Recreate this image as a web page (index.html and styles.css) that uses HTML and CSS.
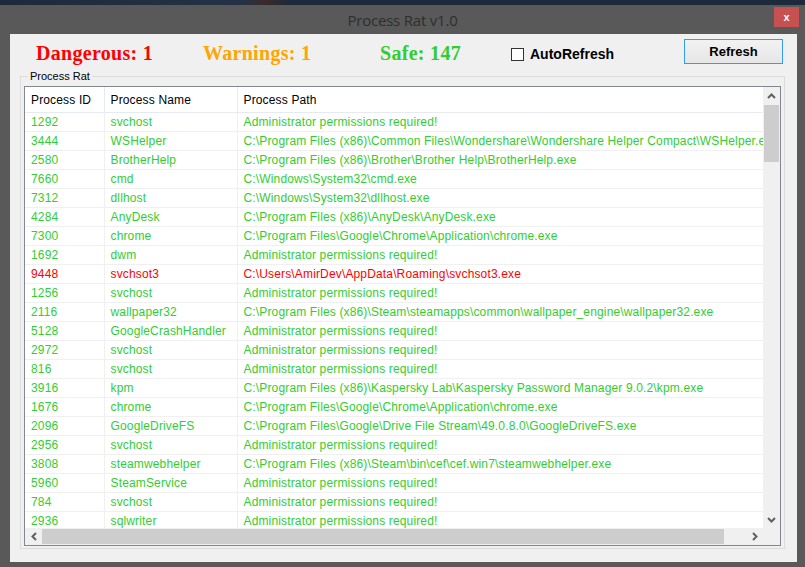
FILE: index.html
```html
<!DOCTYPE html>
<html lang="en">
<head>
    <meta charset="UTF-8">
    <title>Process Rat v1.0</title>
    <link rel="stylesheet" href="styles.css">
</head>
<body>
    <div class="desktop-strip"></div>
    <div class="app-window">
        <div class="title-bar">
            <span class="title-text">Process Rat v1.0</span>
            <button class="close-btn" type="button">x</button>
        </div>

        <div class="client-area">
            <div class="top-bar">
                <span class="stat stat-danger">Dangerous: 1</span>
                <span class="stat stat-warning">Warnings: 1</span>
                <span class="stat stat-safe">Safe: 147</span>
                <label class="auto-refresh">
                    <span class="check-box"></span>
                    AutoRefresh
                </label>
                <button class="refresh-btn" type="button">Refresh</button>
            </div>

            <div class="group-box">
                <span class="group-label">Process Rat</span>

                <div class="list-view">
                    <div class="list-body">
                        <table class="proc-table">
                            <colgroup>
                                <col class="col-id">
                                <col class="col-name">
                                <col class="col-path">
                            </colgroup>
                            <thead>
                                <tr>
                                    <th>Process ID</th>
                                    <th>Process Name</th>
                                    <th>Process Path</th>
                                </tr>
                            </thead>
                            <tbody>
                                <tr><td>1292</td><td>svchost</td><td>Administrator permissions required!</td></tr>
                                <tr><td>3444</td><td>WSHelper</td><td>C:\Program Files (x86)\Common Files\Wondershare\Wondershare Helper Compact\WSHelper.exe</td></tr>
                                <tr><td>2580</td><td>BrotherHelp</td><td>C:\Program Files (x86)\Brother\Brother Help\BrotherHelp.exe</td></tr>
                                <tr><td>7660</td><td>cmd</td><td>C:\Windows\System32\cmd.exe</td></tr>
                                <tr><td>7312</td><td>dllhost</td><td>C:\Windows\System32\dllhost.exe</td></tr>
                                <tr><td>4284</td><td>AnyDesk</td><td>C:\Program Files (x86)\AnyDesk\AnyDesk.exe</td></tr>
                                <tr><td>7300</td><td>chrome</td><td>C:\Program Files\Google\Chrome\Application\chrome.exe</td></tr>
                                <tr><td>1692</td><td>dwm</td><td>Administrator permissions required!</td></tr>
                                <tr class="row-danger"><td>9448</td><td>svchsot3</td><td>C:\Users\AmirDev\AppData\Roaming\svchsot3.exe</td></tr>
                                <tr><td>1256</td><td>svchost</td><td>Administrator permissions required!</td></tr>
                                <tr><td>2116</td><td>wallpaper32</td><td>C:\Program Files (x86)\Steam\steamapps\common\wallpaper_engine\wallpaper32.exe</td></tr>
                                <tr><td>5128</td><td>GoogleCrashHandler</td><td>Administrator permissions required!</td></tr>
                                <tr><td>2972</td><td>svchost</td><td>Administrator permissions required!</td></tr>
                                <tr><td>816</td><td>svchost</td><td>Administrator permissions required!</td></tr>
                                <tr><td>3916</td><td>kpm</td><td>C:\Program Files (x86)\Kaspersky Lab\Kaspersky Password Manager 9.0.2\kpm.exe</td></tr>
                                <tr><td>1676</td><td>chrome</td><td>C:\Program Files\Google\Chrome\Application\chrome.exe</td></tr>
                                <tr><td>2096</td><td>GoogleDriveFS</td><td>C:\Program Files\Google\Drive File Stream\49.0.8.0\GoogleDriveFS.exe</td></tr>
                                <tr><td>2956</td><td>svchost</td><td>Administrator permissions required!</td></tr>
                                <tr><td>3808</td><td>steamwebhelper</td><td>C:\Program Files (x86)\Steam\bin\cef\cef.win7\steamwebhelper.exe</td></tr>
                                <tr><td>5960</td><td>SteamService</td><td>Administrator permissions required!</td></tr>
                                <tr><td>784</td><td>svchost</td><td>Administrator permissions required!</td></tr>
                                <tr><td>2936</td><td>sqlwriter</td><td>Administrator permissions required!</td></tr>
                            </tbody>
                        </table>
                    </div>

                    <div class="v-scroll">
                        <span class="scroll-arrow">
                            <svg width="9" height="6" viewBox="0 0 9 6"><path d="M1 5 L4.5 1.5 L8 5" fill="none" stroke="#606060" stroke-width="2"/></svg>
                        </span>
                        <span class="v-thumb"></span>
                        <span class="scroll-fill"></span>
                        <span class="scroll-arrow">
                            <svg width="9" height="6" viewBox="0 0 9 6"><path d="M1 1 L4.5 4.5 L8 1" fill="none" stroke="#606060" stroke-width="2"/></svg>
                        </span>
                    </div>

                    <div class="h-scroll">
                        <span class="scroll-arrow">
                            <svg width="6" height="9" viewBox="0 0 6 9"><path d="M5 1 L1.5 4.5 L5 8" fill="none" stroke="#606060" stroke-width="2"/></svg>
                        </span>
                        <span class="h-thumb"></span>
                        <span class="scroll-fill"></span>
                        <span class="scroll-arrow">
                            <svg width="6" height="9" viewBox="0 0 6 9"><path d="M1 1 L4.5 4.5 L1 8" fill="none" stroke="#606060" stroke-width="2"/></svg>
                        </span>
                    </div>

                    <div class="scroll-corner"></div>
                </div>
            </div>
        </div>
    </div>
</body>
</html>
```

FILE: styles.css
```css
:root {
    --frame-color: #595959;
    --client-color: #f0f0f0;
    --safe-color: #32cd32;
    --danger-color: #ff0000;
    --warning-color: #ffa500;
    --grid-line: #f0f0f0;
}

* {
    margin: 0;
    padding: 0;
    box-sizing: border-box;
}

body {
    width: 805px;
    height: 567px;
    overflow: hidden;
    background-color: #1c2838;
    font-family: "Liberation Sans", Arial, sans-serif;
    color: #000;
}

.desktop-strip {
    height: 5px;
    background: linear-gradient(90deg, #1d2a3b 0%, #243247 30%, #3a2a2a 33%, #1d2a3b 36%, #1d2a3b 100%);
}

.app-window {
    height: 562px;
    background-color: var(--frame-color);
    padding: 0 8px 5px 10px;
    display: flex;
    flex-direction: column;
}

.title-bar {
    flex-shrink: 0;
    height: 29px;
    display: grid;
    grid-template-columns: 1fr auto 1fr;
    align-items: center;
    margin-left: -10px;
    margin-right: -8px;
}

.title-text {
    grid-column: 2;
    font-family: "Open Sans", "Noto Sans", sans-serif;
    font-size: 15px;
    color: #2e2e2e;
    letter-spacing: -0.2px;
}

.close-btn {
    grid-column: 3;
    justify-self: end;
    align-self: start;
    margin-top: 2px;
    margin-right: 6px;
    width: 25px;
    height: 20px;
    border: none;
    background-color: #c75050;
    color: #fff;
    font-family: "Liberation Sans", Arial, sans-serif;
    font-size: 11px;
    font-weight: 700;
    line-height: 18px;
}

.client-area {
    flex: 1;
    min-height: 0;
    background-color: var(--client-color);
    display: flex;
    flex-direction: column;
    padding-bottom: 13px;
}

.top-bar {
    flex-shrink: 0;
    height: 42px;
    display: flex;
    align-items: flex-start;
    padding-left: 26px;
    padding-right: 14px;
}

.stat {
    font-family: "Liberation Serif", "Times New Roman", serif;
    font-weight: 700;
    font-size: 20px;
    line-height: 20px;
    margin-top: 9px;
    letter-spacing: 0.3px;
}

.stat-danger {
    width: 167px;
    color: var(--danger-color);
}

.stat-warning {
    width: 177px;
    color: var(--warning-color);
}

.stat-safe {
    width: 131px;
    color: var(--safe-color);
}

.auto-refresh {
    display: flex;
    align-items: center;
    gap: 6px;
    margin-top: 12px;
    font-size: 14px;
    font-weight: 700;
    line-height: 16px;
}

.check-box {
    width: 13px;
    height: 13px;
    border: 1px solid #333;
    background-color: #fff;
}

.refresh-btn {
    margin-left: auto;
    margin-top: 5px;
    width: 99px;
    height: 25px;
    border: 1px solid #3399ff;
    background: linear-gradient(#f2f2f2, #e6e6e6);
    font-family: "Liberation Sans", Arial, sans-serif;
    font-size: 13px;
    font-weight: 700;
    color: #000;
}

.group-box {
    position: relative;
    flex: 1;
    min-height: 0;
    margin: 0 12px 0 10px;
    border: 1px solid #dcdcdc;
    padding: 9px 3px 2px 3px;
    display: flex;
}

.group-label {
    position: absolute;
    top: -8px;
    left: 7px;
    padding: 0 2px;
    background-color: var(--client-color);
    font-size: 11px;
    line-height: 14px;
}

.list-view {
    flex: 1;
    min-height: 0;
    border: 1px solid #828790;
    background-color: #fff;
    display: grid;
    grid-template-columns: minmax(0, 1fr) 17px;
    grid-template-rows: minmax(0, 1fr) 17px;
    overflow: hidden;
}

.list-body {
    overflow: hidden;
}

.proc-table {
    table-layout: fixed;
    border-collapse: collapse;
    width: 820px;
    font-size: 12px;
    letter-spacing: 0.15px;
    white-space: nowrap;
}

.col-id {
    width: 79px;
}

.col-name {
    width: 133px;
}

.col-path {
    width: 608px;
}

.proc-table th {
    height: 25px;
    font-weight: 400;
    text-align: left;
    padding: 2px 6px 0;
    border-right: 1px solid #e6ebf2;
    border-bottom: 1px solid #e6ebf2;
}

.proc-table td {
    height: 19px;
    padding: 0 6px;
    color: var(--safe-color);
    border-right: 1px solid var(--grid-line);
    border-bottom: 1px solid var(--grid-line);
    overflow: hidden;
}

.proc-table .row-danger td {
    color: var(--danger-color);
}

.v-scroll {
    background-color: #f0f0f0;
    display: flex;
    flex-direction: column;
    align-items: center;
}

.h-scroll {
    background-color: #f0f0f0;
    display: flex;
    align-items: center;
}

.scroll-arrow {
    width: 17px;
    height: 17px;
    flex-shrink: 0;
    display: flex;
    align-items: center;
    justify-content: center;
}

.v-thumb {
    width: 15px;
    height: 57px;
    margin-top: 1px;
    background-color: #cdcdcd;
}

.h-thumb {
    width: 682px;
    height: 15px;
    background-color: #cdcdcd;
}

.scroll-fill {
    flex: 1;
}

.scroll-corner {
    background-color: #f0f0f0;
}
```
